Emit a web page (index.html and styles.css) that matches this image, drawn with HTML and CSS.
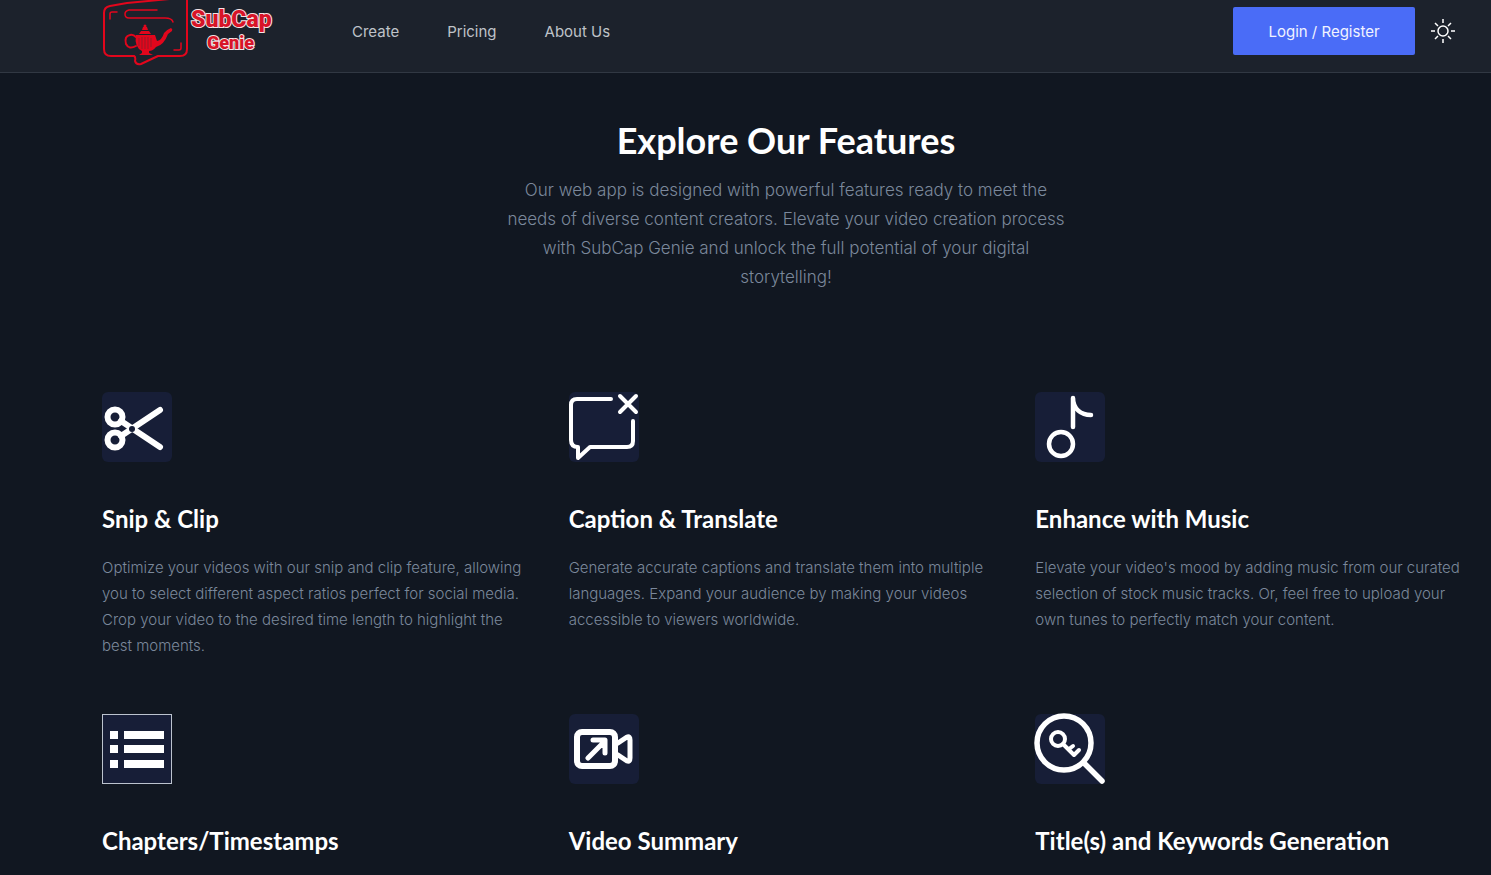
FILE: index.html
```html
<!DOCTYPE html>
<html lang="en">
<head>
    <meta charset="UTF-8">
    <meta name="viewport" content="width=device-width, initial-scale=1.0">
    <title>SubCap Genie</title>
    <link rel="stylesheet" href="styles.css">
</head>
<body>
    <header class="header">
        <a href="#" class="logo" aria-label="SubCap Genie">
            <svg width="172" height="66" viewBox="0 0 172 66">
                <g fill="none" stroke="#e2061c" stroke-width="2" stroke-linecap="round" stroke-linejoin="round">
                    <path d="M78 -2L25 3L8 6Q2 7 2 13V49Q2 56 9 56H32Q34 57 33 61Q34 65 39 64L56 56H78Q85 56 85 49V-2"/>
                    <path stroke-width="1.5" d="M8 19V14Q8 12 10 12H15M79 43V48Q79 50 77 50H72"/>
                    <path stroke-width="1.5" d="M55 10H27Q23 11 23 14Q23 18 27 18H63Q70 18 71 22"/>
                    <path d="M34 46Q27 50 24 44Q22 36 28 35Q31 34 34 37"/>
                </g>
                <g fill="#e2061c">
                    <circle cx="43" cy="26" r="1.5"/>
                    <path d="M41 27h4l1 3h-6zM39 31h8l2 3H37z"/>
                    <path d="M34 35H53L55 41Q60 40 62 33Q64 30 69 28Q71 29 70 31L66 34Q62 45 54 47Q51 51 47 51V53L51 55H37L40 53V51Q32 47 34 35Z"/>
                </g>
                <path d="M37 38v8M40 37v12M43 37v12M46 37v12M49 38v9" stroke="#971827" stroke-width="1" fill="none"/>
                <text class="logo-name" x="89" y="27">SubCap</text>
                <text class="logo-sub" x="105" y="49">Genie</text>
            </svg>
        </a>
        <nav class="nav">
            <a href="#">Create</a>
            <a href="#">Pricing</a>
            <a href="#">About Us</a>
        </nav>
        <button class="login">Login / Register</button>
        <button class="theme" aria-label="Toggle theme">
            <svg width="24" height="24" viewBox="0 0 24 24" fill="none" stroke="#fff" stroke-width="1.5">
                <circle cx="12" cy="12" r="5"/>
                <path d="M12 0v4M12 20v4M0 12h4M20 12h4M4 4l3 3M17 17l3 3M4 20l3-3M17 7l3-3"/>
            </svg>
        </button>
    </header>

    <main class="features">
        <div class="intro">
            <h1>Explore Our Features</h1>
            <p>Our web app is designed with powerful features ready to meet the needs of diverse content creators. Elevate your video creation process with SubCap Genie and unlock the full potential of your digital storytelling!</p>
        </div>

        <div class="grid">
            <section class="card">
                <svg class="icon" viewBox="0 0 70 70" fill="none" stroke="#fff" stroke-width="6" stroke-linecap="round">
                    <circle cx="13" cy="25" r="7.5"/>
                    <circle cx="13" cy="48" r="7.5"/>
                    <path d="M19 29L58 55M19 44L58 18"/>
                    <circle cx="30" cy="37" r="3" fill="#171e37" stroke="none"/>
                </svg>
                <h2>Snip &amp; Clip</h2>
                <p>Optimize your videos with our snip and clip feature, allowing you to select different aspect ratios perfect for social media. Crop your video to the desired time length to highlight the best moments.</p>
            </section>
            <section class="card">
                <svg class="icon" viewBox="0 0 70 70" fill="none" stroke="#fff" stroke-width="4" stroke-linecap="round" stroke-linejoin="round">
                    <path d="M42 7H8Q2 7 2 13V48Q2 55 9 55V66L21 55H58Q64 55 64 49V29M51 4L67 20M67 4L51 20"/>
                </svg>
                <h2>Caption &amp; Translate</h2>
                <p>Generate accurate captions and translate them into multiple languages. Expand your audience by making your videos accessible to viewers worldwide.</p>
            </section>
            <section class="card">
                <svg class="icon" viewBox="0 0 70 70" fill="none" stroke="#fff" stroke-width="4.5" stroke-linecap="round">
                    <circle cx="26" cy="52" r="12"/>
                    <path d="M38 6V35M38 6C38 17 46 23 56 23"/>
                </svg>
                <h2>Enhance with Music</h2>
                <p>Elevate your video's mood by adding music from our curated selection of stock music tracks. Or, feel free to upload your own tunes to perfectly match your content.</p>
            </section>
            <section class="card">
                <svg class="icon icon-framed" viewBox="0 0 68 68" fill="#fff">
                    <path d="M7 16h8v8H7zM21 16h40v8H21zM7 30h8v8H7zM21 30h40v8H21zM7 45h8v8H7zM21 45h40v8H21z"/>
                </svg>
                <h2>Chapters/Timestamps</h2>
            </section>
            <section class="card">
                <svg class="icon" viewBox="0 0 70 70" fill="none" stroke="#fff" stroke-width="5" stroke-linecap="round" stroke-linejoin="round">
                    <rect x="8" y="18" width="38" height="34" rx="5" stroke-width="6"/>
                    <path d="M19 44L35 28M24 26H36V39M49 29L58 23Q61 22 61 26V44Q61 48 58 47L49 41"/>
                </svg>
                <h2>Video Summary</h2>
            </section>
            <section class="card">
                <svg class="icon" viewBox="0 0 70 70" fill="none" stroke="#fff" stroke-width="5.5" stroke-linecap="round" stroke-linejoin="round">
                    <circle cx="29" cy="29" r="27"/>
                    <path d="M50 50L67 67"/>
                    <circle cx="23" cy="25" r="7" stroke-width="4"/>
                    <path d="M28 30L39 41L44 36M34 35L38 32" stroke-width="4"/>
                </svg>
                <h2>Title(s) and Keywords Generation</h2>
            </section>
        </div>
    </main>
</body>
</html>
```
FILE: styles.css
```css
* {
    box-sizing: border-box;
}

body {
    margin: 0;
    background-color: #111721;
    color: white;
    font-family: Inter, "Liberation Sans", sans-serif;
}

h1, h2, p {
    margin: 0;
}

h1, h2 {
    font-family: Lato, "Liberation Sans", sans-serif;
    font-weight: 700;
}

.header {
    display: flex;
    align-items: flex-start;
    height: 73px;
    padding: 0 36px 0 102px;
    background-color: #1c222c;
    border-bottom: 1px solid #313843;
}

.logo svg {
    display: block;
}

.logo-name, .logo-sub {
    font-family: Roboto, sans-serif;
    font-weight: 900;
    fill: #d81428;
    stroke: #f3e4e6;
    stroke-width: 2px;
    paint-order: stroke;
}

.logo-name {
    font-size: 23px;
}

.logo-sub {
    font-size: 18px;
}

.nav {
    display: flex;
    gap: 48px;
    margin-left: 78px;
    line-height: 64px;
}

.nav a {
    color: #bfc3c9;
    font-size: 15px;
    text-decoration: none;
}

.login {
    width: 182px;
    height: 48px;
    margin: 7px 16px 0 auto;
    border: none;
    border-radius: 2px;
    background-color: #4a6cf7;
    color: #f1f3ff;
    font-family: inherit;
    font-size: 15px;
    cursor: pointer;
}

.theme {
    padding: 0;
    margin-top: 19px;
    border: none;
    background: none;
    cursor: pointer;
}

.theme svg {
    display: block;
}

.features {
    padding: 42px 21px 0 102px;
}

.intro {
    max-width: 570px;
    margin: 0 auto 100px;
    text-align: center;
}

.intro h1 {
    margin-bottom: 11px;
    font-size: 36px;
    line-height: 50px;
}

.intro p {
    color: #7b889b;
    font-size: 17px;
    font-weight: 300;
    line-height: 29px;
}

.grid {
    display: grid;
    grid-template-columns: repeat(3, 1fr);
    gap: 55px 32px;
}

.icon {
    display: block;
    width: 70px;
    height: 70px;
    margin-bottom: 40px;
    border-radius: 6px;
    background-color: #171e37;
    overflow: visible;
}

.icon-framed {
    border: 1px solid #bcc3ce;
    border-radius: 0;
}

.card h2 {
    margin-bottom: 19px;
    font-size: 24px;
    line-height: 34px;
}

.card p {
    color: #7b889b;
    font-size: 15px;
    font-weight: 300;
    line-height: 26px;
}
```
